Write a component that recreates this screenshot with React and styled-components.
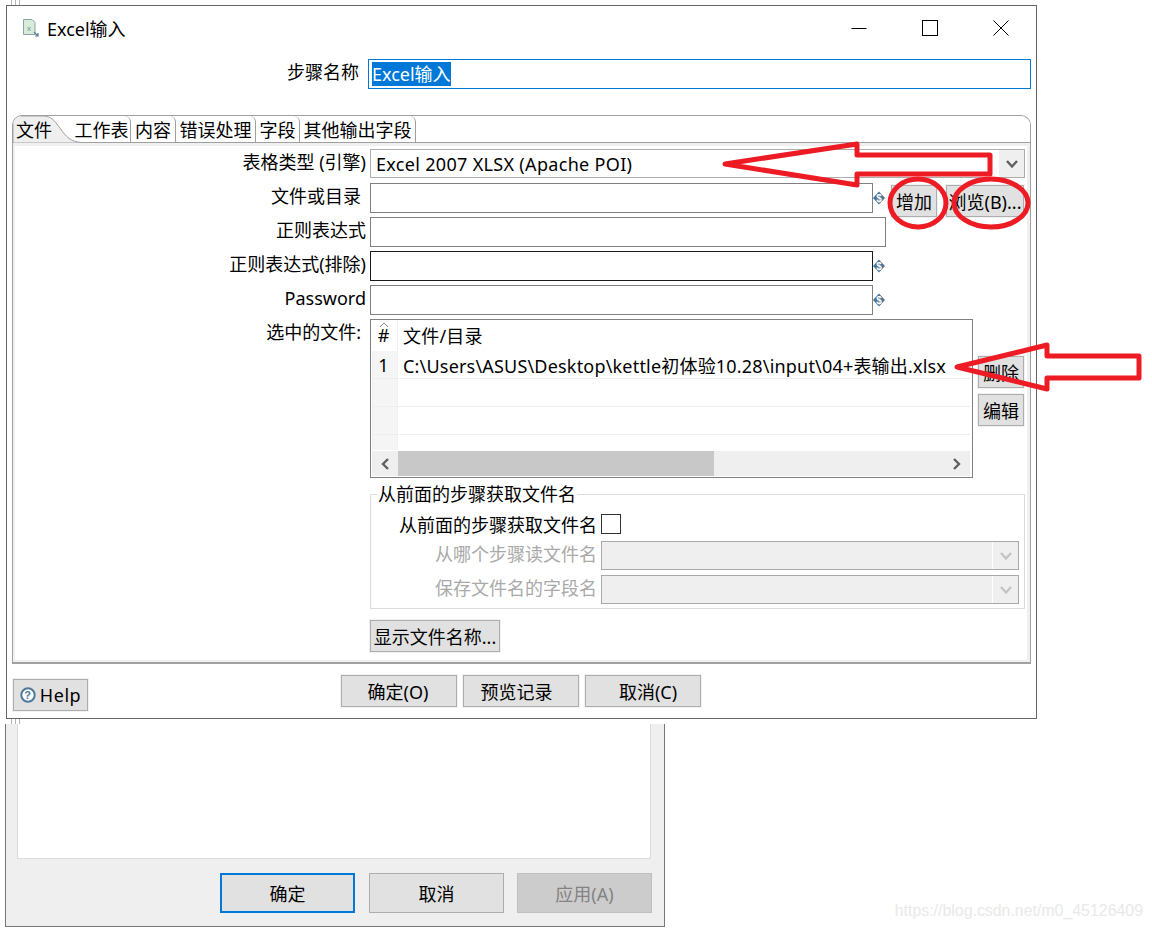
import React from 'react';
import styled, { createGlobalStyle } from 'styled-components';

const tabs = ['工作表', '内容', '错误处理', '字段', '其他输出字段'];
const tabWidths = [57, 45, 80, 44, 116];

const Global = createGlobalStyle`
  html, body { margin: 0; padding: 0; background: #fff; }
  body { font-family: "Noto Sans", "Noto Sans CJK SC", sans-serif; color: #000; }
  * { box-sizing: border-box; }
`;

const Desktop = styled.div`
  position: relative;
  width: 1152px;
  height: 930px;
  overflow: hidden;
  background: #fff;
`;

const Ticks = styled.div`
  position: absolute;
  left: 11px;
  top: ${(p) => p.$top}px;
  width: 12px;
  height: 5px;
  background: repeating-linear-gradient(90deg, #b5b5b5 0 1px, #fff 1px 4px);
`;

const BackWindow = styled.div`
  position: absolute;
  left: 5px;
  top: 724px;
  width: 660px;
  height: 203px;
  padding: 0 12px 0 11px;
  background: #efefef;
  border: 1px solid #777;
  border-top: 0;
  display: flex;
  flex-direction: column;
`;

const BackPanel = styled.div`
  height: 135px;
  width: 634px;
  background: #fff;
  border: 1px solid #dcdcdc;
  border-top: 0;
`;

const BackFooter = styled.div`
  margin-top: 14px;
  display: flex;
  justify-content: flex-end;
  gap: 13px;
`;

const BackButton = styled.div`
  width: 135px;
  height: 40px;
  margin-right: ${(p) => (p.$primary ? 1 : 0)}px;
  display: flex;
  align-items: center;
  justify-content: center;
  font-size: 18px;
  background: ${(p) => (p.$disabled ? '#cccccc' : '#e1e1e1')};
  color: ${(p) => (p.$disabled ? '#838383' : '#000')};
  border: ${(p) => (p.$primary ? '2px solid #0078d7' : p.$disabled ? '1px solid #bfbfbf' : '1px solid #adadad')};
`;

const Dialog = styled.div`
  position: absolute;
  left: 6px;
  top: 5px;
  width: 1031px;
  height: 714px;
  background: #fff;
  border: 1px solid #666;
  display: flex;
  flex-direction: column;
`;

const TitleBar = styled.div`
  height: 44px;
  display: flex;
  align-items: center;
  padding-left: 15px;
  font-size: 18px;
  flex: none;
`;

const TitleText = styled.span`
  margin-left: 7px;
`;

const WindowControls = styled.div`
  margin-left: auto;
  display: flex;
  align-items: center;
  margin-right: 27px;
  gap: 55px;
`;

const NameRow = styled.div`
  height: 30px;
  margin-top: 9px;
  display: grid;
  grid-template-columns: 352px 663px;
  column-gap: 9px;
  flex: none;
`;

const Label = styled.div`
  display: flex;
  align-items: flex-start;
  justify-content: flex-end;
  font-size: 18px;
  line-height: 26px;
  white-space: nowrap;
  padding-right: ${(p) => p.$inset || 0}px;
  color: ${(p) => (p.$muted ? '#a9a9a9' : '#000')};
`;

const NameInput = styled.div`
  border: 1px solid #0078d7;
  padding: 2px 3px;
  font-size: 18px;
  display: flex;
  align-items: stretch;
`;

const Selected = styled.span`
  background: #0078d7;
  color: #fff;
  line-height: 24px;
`;

const Folder = styled.div`
  margin: 26px 0 0 5px;
  width: 1019px;
  height: 549px;
  border: 1px solid #a0a0a0;
  border-bottom-width: 2px;
  border-radius: 10px 10px 0 0;
  overflow: hidden;
  background: #f0f0f0;
  display: flex;
  flex-direction: column;
  flex: none;
`;

const TabStrip = styled.div`
  height: 27px;
  flex: none;
  display: flex;
  background: #fff;
  position: relative;
`;

const ActiveTab = styled.div`
  position: relative;
  width: 60px;
  flex: none;
  font-size: 18px;
  padding-left: 3px;
  line-height: 28px;
  z-index: 1;
`;

const ActiveTabShape = styled.svg`
  position: absolute;
  left: 0;
  top: 0;
  z-index: -1;
`;

const Tab = styled.div`
  flex: none;
  width: ${(p) => p.$width}px;
  height: 100%;
  text-align: center;
  font-size: 18px;
  line-height: 28px;
  white-space: nowrap;
  border-right: 1px solid #a0a0a0;
  border-bottom: 1px solid #a0a0a0;
  border-top-right-radius: 6px;
`;

const TabFill = styled.div`
  flex: 1;
  border-bottom: 1px solid #a0a0a0;
`;

const FormBody = styled.div`
  margin: 3px 3px 2px 2px;
  flex: 1;
  background: #fff;
  padding-top: 3px;
  display: flex;
  flex-direction: column;
`;

const Row = styled.div`
  display: grid;
  grid-template-columns: 351px 1fr;
  column-gap: 4px;
  height: ${(p) => p.$height}px;
  margin-top: ${(p) => p.$gap ?? 4}px;
  flex: none;
`;

const Fields = styled.div`
  display: flex;
  align-items: flex-start;
  min-width: 0;
`;

const Combo = styled.div`
  width: ${(p) => p.$width}px;
  height: 29px;
  border: 1px solid ${(p) => (p.$disabled ? '#a9a9a9' : '#adadad')};
  background: ${(p) => (p.$disabled ? '#efefef' : '#fff')};
  display: flex;
  align-items: center;
  font-size: 18px;
  letter-spacing: 0.32px;
  padding-left: 5px;
`;

const ComboArrow = styled.div`
  margin-left: auto;
  width: 26px;
  height: 100%;
  background: #efefef;
  border-left: 1px solid #fff;
  display: flex;
  align-items: center;
  justify-content: center;
`;

const Input = styled.div`
  width: ${(p) => p.$width}px;
  height: 30px;
  flex: none;
  background: #fff;
  border: 1px solid ${(p) => (p.$dark ? '#1a1a1a' : '#808080')};
`;

const VarIcon = styled.svg`
  flex: none;
  margin-top: 8px;
`;

const Button = styled.div`
  flex: none;
  width: ${(p) => p.$width}px;
  height: ${(p) => p.$height || 32}px;
  margin-left: ${(p) => p.$left || 0}px;
  margin-top: ${(p) => p.$top || 0}px;
  padding: 0 ${(p) => p.$padRight || 0}px 0 ${(p) => p.$padLeft || 0}px;
  display: flex;
  align-items: center;
  justify-content: center;
  font-size: 18px;
  white-space: nowrap;
  background: #e1e1e1;
  border: 1px solid #adadad;
  box-shadow: 0 0 0 1px #f2f2f2;
`;

const SideButtons = styled.div`
  margin-left: 5px;
  padding-top: 37px;
  display: flex;
  flex-direction: column;
  gap: 6px;
`;

const Table = styled.div`
  width: 603px;
  height: 159px;
  flex: none;
  border: 1px solid #808080;
  padding: 0 2px 2px 1px;
  display: flex;
  flex-direction: column;
  font-size: 18px;
`;

const TableRow = styled.div`
  display: grid;
  grid-template-columns: 26px 1fr;
  height: ${(p) => p.$height}px;
  flex: none;
  border-bottom: 1px solid ${(p) => (p.$plain ? 'transparent' : '#eeeeee')};
`;

const RowHead = styled.div`
  position: relative;
  background: ${(p) => (p.$header ? '#fff' : '#f5f5f5')};
  border-right: 1px solid #eef0f6;
  padding-right: 2px;
  display: flex;
  align-items: center;
  justify-content: center;
`;

const SortMark = styled.svg`
  position: absolute;
  left: 7px;
  top: 2px;
`;

const Cell = styled.div`
  padding-left: 5px;
  display: flex;
  align-items: center;
  white-space: nowrap;
  letter-spacing: 0.19px;
`;

const ScrollBar = styled.div`
  height: 25px;
  flex: none;
  display: flex;
  background: #efefef;
`;

const ScrollEnd = styled.div`
  width: 26px;
  flex: none;
  display: flex;
  align-items: center;
  justify-content: center;
  margin-left: ${(p) => (p.$end ? 'auto' : 0)};
`;

const ScrollThumb = styled.div`
  width: 316px;
  background: #c8c8c8;
`;

const SourceGroup = styled.fieldset`
  margin: 6px 0 0 355px;
  width: 655px;
  height: 125px;
  flex: none;
  border: 1px solid #dcdcdc;
  padding: 0 5px 0 0;
  min-inline-size: 0;
  display: flex;
  flex-direction: column;
`;

const GroupLegend = styled.legend`
  margin-left: 6px;
  padding: 0 1px;
  font-size: 18px;
  line-height: 20px;
  white-space: nowrap;
`;

const GroupRow = styled.div`
  display: grid;
  grid-template-columns: 226px 1fr;
  column-gap: 4px;
  height: ${(p) => p.$height}px;
  margin-top: ${(p) => p.$gap}px;
  flex: none;
`;

const Checkbox = styled.div`
  width: 20px;
  height: 20px;
  border: 1px solid #333;
  margin-top: 2px;
`;

const Footer = styled.div`
  display: flex;
  align-items: flex-start;
  padding: 11px 0 0 334px;
  gap: 6px;
  position: relative;
`;

const HelpButton = styled(Button)`
  position: absolute;
  left: 6px;
  top: 15px;
  gap: 4px;
  letter-spacing: 0.6px;
`;

const Annotations = styled.svg`
  position: absolute;
  left: 0;
  top: 0;
  pointer-events: none;
`;

const Watermark = styled.div`
  position: absolute;
  right: 9px;
  top: 902px;
  font-family: "Liberation Sans", Arial, sans-serif;
  font-size: 15.9px;
  color: #e9e9e9;
  white-space: nowrap;
`;

function Chevron({ disabled }) {
  const c = disabled ? '#c4c4c4' : '#606060';
  return (
    <svg width="14" height="10" viewBox="0 0 14 10">
      <path d="M2 2 L7 7.5 L12 2" fill="none" stroke={c} strokeWidth="2.4" />
    </svg>
  );
}

function VariableMark() {
  return (
    <VarIcon width="12" height="14" viewBox="0 0 12 14">
      <path d="M6 0.5 L12 7 L6 13.5 L0 7 Z" fill="#4a7392" />
      <text x="6" y="10.5" textAnchor="middle" fontSize="10" fontWeight="700" fill="#fff" fontFamily="Liberation Sans">$</text>
    </VarIcon>
  );
}

function ExcelIcon() {
  return (
    <svg width="18" height="20" viewBox="0 0 18 20">
      <path d="M1.5 1.5 H10 L13 4.5 V16.5 H1.5 Z" fill="#d9ecd8" stroke="#8aa2ad" />
      <text x="7" y="12.5" textAnchor="middle" fontSize="8" fill="#6f8f9c" fontFamily="Liberation Sans">x</text>
      <path d="M12 14 L16 18 M16 15 V18 H13" fill="none" stroke="#5d7f95" strokeWidth="1.2" />
    </svg>
  );
}

function HelpIcon() {
  return (
    <svg width="16" height="16" viewBox="0 0 16 16">
      <circle cx="8" cy="8" r="6.7" fill="#fff" stroke="#4f7898" strokeWidth="2" />
      <text x="8" y="11.8" textAnchor="middle" fontSize="11" fontWeight="700" fill="#4f7898" fontFamily="Liberation Sans">?</text>
    </svg>
  );
}

export default function App() {
  return (
    <Desktop>
      <Global />
      <Ticks $top={0} />
      <Ticks $top={719} />

      <BackWindow>
        <BackPanel />
        <BackFooter>
          <BackButton $primary>确定</BackButton>
          <BackButton>取消</BackButton>
          <BackButton $disabled>应用(A)</BackButton>
        </BackFooter>
      </BackWindow>

      <Dialog>
        <TitleBar>
          <ExcelIcon />
          <TitleText>Excel输入</TitleText>
          <WindowControls>
            <svg width="16" height="16" viewBox="0 0 16 16">
              <path d="M0.5 8.5 H15.5" stroke="#000" />
            </svg>
            <svg width="16" height="16" viewBox="0 0 16 16">
              <rect x="0.5" y="0.5" width="15" height="15" fill="none" stroke="#000" />
            </svg>
            <svg width="16" height="16" viewBox="0 0 16 16">
              <path d="M0.5 0.5 L15.5 15.5 M15.5 0.5 L0.5 15.5" stroke="#000" />
            </svg>
          </WindowControls>
        </TitleBar>

        <NameRow>
          <Label>步骤名称</Label>
          <NameInput><Selected>Excel输入</Selected></NameInput>
        </NameRow>

        <Folder>
          <TabStrip>
            <ActiveTab>
              <ActiveTabShape width="70" height="27" viewBox="0 0 70 27">
                <path d="M0 27 V0 H30 C38 0 41 4 47 12 C53 21 58 26 69 26.5 V27 Z" fill="#efefef" stroke="#a0a0a0" />
              </ActiveTabShape>
              文件
            </ActiveTab>
            {tabs.map((t, i) => (
              <Tab key={t} $width={tabWidths[i] + (i === 0 ? 1 : 0)}>{t}</Tab>
            ))}
            <TabFill />
          </TabStrip>

          <FormBody>
            <Row $height={29} $gap={0}>
              <Label>表格类型 (引擎)</Label>
              <Fields>
                <Combo $width={655}>
                  Excel 2007 XLSX (Apache POI)
                  <ComboArrow><Chevron /></ComboArrow>
                </Combo>
              </Fields>
            </Row>
            <Row $height={30} $gap={5}>
              <Label $inset={5}>文件或目录</Label>
              <Fields>
                <Input $width={503} />
                <VariableMark />
                <Button $width={46} $left={6} $top={2}>增加</Button>
                <Button $width={78} $left={9} $top={2}>浏览(B)...</Button>
              </Fields>
            </Row>
            <Row $height={30}>
              <Label>正则表达式</Label>
              <Fields><Input $width={516} /></Fields>
            </Row>
            <Row $height={30}>
              <Label>正则表达式(排除)</Label>
              <Fields>
                <Input $width={503} $dark />
                <VariableMark />
              </Fields>
            </Row>
            <Row $height={30}>
              <Label>Password</Label>
              <Fields>
                <Input $width={503} />
                <VariableMark />
              </Fields>
            </Row>
            <Row $height={159}>
              <Label $inset={5}>选中的文件:</Label>
              <Fields>
                <Table>
                  <TableRow $height={31} $plain>
                    <RowHead $header>
                      <SortMark width="10" height="6" viewBox="0 0 10 6">
                        <path d="M1 5 L5 1 L9 5" fill="none" stroke="#8a8a8a" />
                      </SortMark>
                      #
                    </RowHead>
                    <Cell>文件/目录</Cell>
                  </TableRow>
                  <TableRow $height={28}>
                    <RowHead>1</RowHead>
                    <Cell>C:\Users\ASUS\Desktop\kettle初体验10.28\input\04+表输出.xlsx</Cell>
                  </TableRow>
                  <TableRow $height={28}><RowHead /><Cell /></TableRow>
                  <TableRow $height={28}><RowHead /><Cell /></TableRow>
                  <TableRow $height={16} $plain><RowHead /><Cell /></TableRow>
                  <ScrollBar>
                    <ScrollEnd>
                      <svg width="10" height="14" viewBox="0 0 10 14">
                        <path d="M8 2 L3 7 L8 12" fill="none" stroke="#606060" strokeWidth="2.4" />
                      </svg>
                    </ScrollEnd>
                    <ScrollThumb />
                    <ScrollEnd $end>
                      <svg width="10" height="14" viewBox="0 0 10 14">
                        <path d="M2 2 L7 7 L2 12" fill="none" stroke="#606060" strokeWidth="2.4" />
                      </svg>
                    </ScrollEnd>
                  </ScrollBar>
                </Table>
                <SideButtons>
                  <Button $width={46}>删除</Button>
                  <Button $width={46}>编辑</Button>
                </SideButtons>
              </Fields>
            </Row>

            <SourceGroup>
              <GroupLegend>从前面的步骤获取文件名</GroupLegend>
              <GroupRow $height={26} $gap={8}>
                <Label>从前面的步骤获取文件名</Label>
                <Fields><Checkbox /></Fields>
              </GroupRow>
              <GroupRow $height={29} $gap={3}>
                <Label $muted>从哪个步骤读文件名</Label>
                <Fields>
                  <Combo $width={418} $disabled>
                    <ComboArrow><Chevron disabled /></ComboArrow>
                  </Combo>
                </Fields>
              </GroupRow>
              <GroupRow $height={29} $gap={5}>
                <Label $muted>保存文件名的字段名</Label>
                <Fields>
                  <Combo $width={418} $disabled>
                    <ComboArrow><Chevron disabled /></ComboArrow>
                  </Combo>
                </Fields>
              </GroupRow>
            </SourceGroup>

            <Button $width={130} $left={355} $top={11}>显示文件名称...</Button>
          </FormBody>
        </Folder>

        <Footer>
          <HelpButton $width={75}><HelpIcon />Help</HelpButton>
          <Button $width={116} $padRight={2}>确定(O)</Button>
          <Button $width={116} $padRight={9}>预览记录</Button>
          <Button $width={116} $padLeft={10}>取消(C)</Button>
        </Footer>
      </Dialog>

      <Annotations width="1152" height="930" viewBox="0 0 1152 930">
        <g fill="none" stroke="#ed1c24" strokeWidth="5" strokeLinejoin="round">
          <path d="M725 164 L857 144 L857 155 L990 155 L990 174 L857 174 L857 185 Z" />
          <path d="M957 367 L1047 345 L1047 356 L1139 356 L1139 378 L1047 378 L1047 389 Z" />
          <ellipse cx="918" cy="203" rx="28" ry="24" />
          <ellipse cx="991" cy="203" rx="37" ry="24" />
        </g>
      </Annotations>

      <Watermark>https://blog.csdn.net/m0_45126409</Watermark>
    </Desktop>
  );
}
